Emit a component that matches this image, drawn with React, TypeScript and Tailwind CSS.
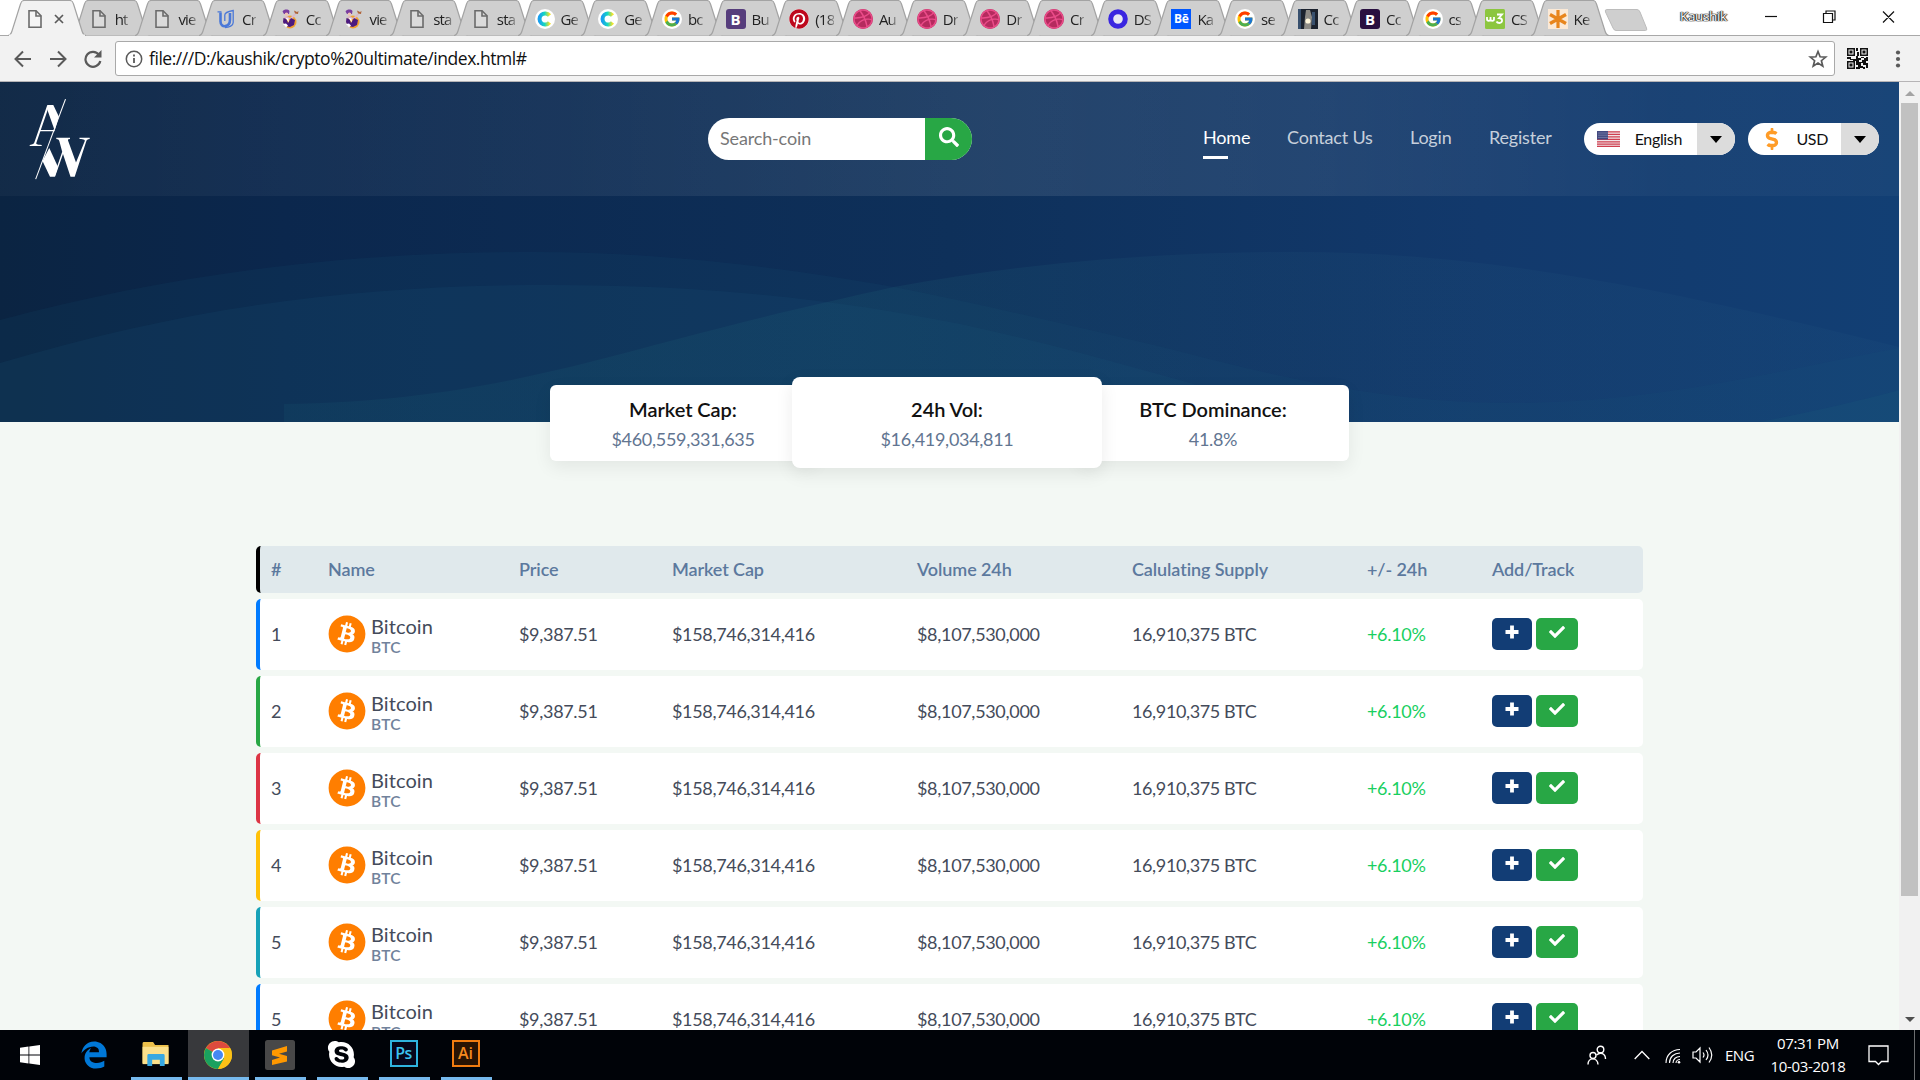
import React from 'react';
import { FaSearch, FaCheck, FaDollarSign, FaSkype, FaBitcoin, FaDribbble, FaPinterest, FaEdgeLegacy } from 'react-icons/fa';
import { FcGoogle } from 'react-icons/fc';

const uiFont = "font-['Open_Sans','Noto_Sans',sans-serif]";

function PageIcon() {
  return (
    <svg viewBox="0 0 20 20" className="h-5 w-5" fill="#fff" fillOpacity=".25" stroke="#6b6b6b" strokeWidth="1.6">
      <path d="M4 1.8h7l5 5v11.400H4z" />
      <path d="M11 1.800v5.200h5.200" fill="none" />
    </svg>
  );
}

function UIcon() {
  return (
    <svg viewBox="0 0 20 20" className="h-5 w-5" fill="none" stroke="#4a78d8">
      <path d="M4.500 3.500v9c0 7 9.500 6 9.500-2V4" strokeWidth="2.600" />
      <path d="M1.500 2.800h4M8.800 12V6c0-2 3-3.500 8.400-4.500v12c0 3-4 5-8.200 5" strokeWidth="1.300" />
    </svg>
  );
}

function GenieIcon() {
  return (
    <svg viewBox="0 0 20 20" className="h-5 w-5">
      <circle cx="10" cy="13" r="6.500" fill="#f0a030" />
      <path d="M2.500 2.500C4 0 8 0 9.500 2L9 5H4z" fill="#7a3da0" />
      <circle cx="6.500" cy="5.200" r="1.800" fill="#f0c4b4" />
      <path d="M14 1.500l3 1.500 1.500-1L18 5l-3-.5z" fill="#b0643a" />
      <path d="M3 8l4-1 3 2 4.500-4.500 1.500 1-4 4.500H6z" fill="#dcb8c8" />
      <path d="M3.500 9l3 1 1.500 4 3-5 4 2-1 5-4 2-5-1-2-4z" fill="#4b1a80" />
      <path d="M5.500 9l3 .5.500 4z" fill="#fff" />
      <path d="M3 15l3-.5 2 2-2 2z" fill="#fff" />
    </svg>
  );
}

function CIcon() {
  return (
    <svg viewBox="0 0 20 20" className="h-5 w-5">
      <defs>
        <linearGradient id="ring" x1="0" x2="1">
          <stop offset="0" stopColor="#1aa0ee" />
          <stop offset="0.5" stopColor="#14d8c0" />
          <stop offset="1" stopColor="#f2e22c" />
        </linearGradient>
      </defs>
      <circle cx="10" cy="10" r="10" fill="#fff" />
      <path d="M14.500 6.500a5.600 5.600 0 1 0 0 7" fill="none" stroke="url(#ring)" strokeWidth="4" />
    </svg>
  );
}

function GoogleIcon() {
  return (
    <span className="flex h-5 w-5 items-center justify-center rounded-full bg-white">
      <FcGoogle className="h-[18px] w-[18px]" />
    </span>
  );
}

function BIcon({ dark = false }: { dark?: boolean }) {
  return (
    <span className={`flex h-5 w-5 items-center justify-center rounded-[3px] text-[15px] font-bold leading-none text-white ${dark ? 'bg-[#2a1040]' : 'bg-[#563d7c]'}`}>B</span>
  );
}

function PinIcon() {
  return (
    <span className="flex h-5 w-5 items-center justify-center rounded-full bg-white">
      <FaPinterest className="h-5 w-5 text-[#bd081c]" />
    </span>
  );
}

function DribbbleIcon() {
  return (
    <span className="flex h-5 w-5 items-center justify-center rounded-full bg-[#b52a5e]">
      <FaDribbble className="h-5 w-5 text-[#ea4c89]" />
    </span>
  );
}

function RingIcon() {
  return (
    <svg viewBox="0 0 20 20" className="h-5 w-5">
      <circle cx="10" cy="10" r="7.300" fill="#e8e8f4" stroke="#3a26e0" strokeWidth="5" />
    </svg>
  );
}

function BeIcon() {
  return <span className="flex h-5 w-5 items-center justify-center bg-[#0057ff] text-[12px] font-bold leading-none tracking-tight text-white">Bē</span>;
}

function PhotoIcon() {
  return (
    <svg viewBox="0 0 20 20" className="h-5 w-5">
      <rect width="20" height="20" fill="#1b222e" />
      <path d="M0 0h3v20H0zM14 3h3v13h-3z" fill="#38506e" />
      <path d="M8 1h4l2 7-1 12H6L7 8z" fill="#8d8b86" />
      <circle cx="10" cy="12" r="2.6" fill="#fff6dc" />
    </svg>
  );
}

function W3Icon() {
  return (
    <svg viewBox="0 0 20 20" className="h-5 w-5">
      <rect width="20" height="20" rx="1.5" fill="#8cc63f" />
      <path d="M2 8v2c0 2.400 3.500 2.400 3.500 0V8v2c0 2.400 3.500 2.400 3.500 0V8M12 5.500h5l-3 3.500c4 0 4 5 .5 5-1.500 0-2.500-.5-3-1.500" fill="none" stroke="#fff" strokeWidth="1.8" />
    </svg>
  );
}

function StarburstIcon() {
  return (
    <svg viewBox="0 0 20 20" className="h-5 w-5">
      <rect width="20" height="20" fill="#fbe9d6" />
      <path d="M10 1v18M2 5.500l16 9M18 5.500l-16 9" stroke="#e8851c" strokeWidth="3.200" />
    </svg>
  );
}

const tabs: { icon: React.ReactNode; label: string }[] = [
  { icon: <PageIcon />, label: '' },
  { icon: <PageIcon />, label: 'ht' },
  { icon: <PageIcon />, label: 'vie' },
  { icon: <UIcon />, label: 'Cr' },
  { icon: <GenieIcon />, label: 'Cc' },
  { icon: <GenieIcon />, label: 'vie' },
  { icon: <PageIcon />, label: 'sta' },
  { icon: <PageIcon />, label: 'sta' },
  { icon: <CIcon />, label: 'Ge' },
  { icon: <CIcon />, label: 'Ge' },
  { icon: <GoogleIcon />, label: 'bc' },
  { icon: <BIcon />, label: 'Bu' },
  { icon: <PinIcon />, label: '(18' },
  { icon: <DribbbleIcon />, label: 'Au' },
  { icon: <DribbbleIcon />, label: 'Dr' },
  { icon: <DribbbleIcon />, label: 'Dr' },
  { icon: <DribbbleIcon />, label: 'Cr' },
  { icon: <RingIcon />, label: 'DS' },
  { icon: <BeIcon />, label: 'Ka' },
  { icon: <GoogleIcon />, label: 'se' },
  { icon: <PhotoIcon />, label: 'Cc' },
  { icon: <BIcon dark />, label: 'Cc' },
  { icon: <GoogleIcon />, label: 'cs' },
  { icon: <W3Icon />, label: 'CS' },
  { icon: <StarburstIcon />, label: 'Ke' },
];

function Tab({ icon, label, active, narrow }: { icon: React.ReactNode; label: string; active: boolean; narrow: boolean }) {
  return (
    <div className={`relative h-9 shrink-0 ${narrow ? 'w-[62.5px]' : 'w-[63.7px]'} ${active ? 'z-10' : ''}`}>
      <svg viewBox="0 0 80 36" className="absolute left-0 top-0 h-9 w-[80px]">
        <path
          d="M0 35.500C2 35.500 3 34 4 31L12.500 4C13.500 1 14 .5 16 .5H62C64 .5 64.500 1 65.500 4L74 31C75 34 76 35.500 78 35.500"
          fill={active ? '#f2f2f2' : '#cfcfcf'}
          stroke="#a3a3a3"
          strokeWidth="1.2"
        />
        {active && <path d="M1 35.500h76" stroke="#f2f2f2" strokeWidth="2" />}
      </svg>
      <div className="relative flex h-9 items-center gap-[10px] pl-[17px] pt-[2px]">
        <span className="h-5 w-5 shrink-0">{icon}</span>
        {active ? (
          <svg viewBox="0 0 10 10" className="-ml-px h-[10px] w-[10px]" stroke="#5a5a5a" strokeWidth="1.700">
            <path d="M1 1l8 8M9 1l-8 8" />
          </svg>
        ) : (
          <span className="-ml-[4px] whitespace-nowrap pb-px text-[15px] leading-5 tracking-[-0.8px] text-[#222] [mask-image:linear-gradient(to_right,#000_60%,rgba(0,0,0,0.35))]">{label}</span>
        )}
      </div>
    </div>
  );
}

function BrowserChrome() {
  return (
    <div className={uiFont}>
      <div className="flex h-9 items-start border-b border-[#a8a8a8] bg-white">
        <div className="flex w-[1580px] shrink-0 pl-2">
          {tabs.map((t, i) => (
            <Tab key={i} icon={t.icon} label={t.label} active={i === 0} narrow={i > 18} />
          ))}
        </div>
        <svg viewBox="0 0 44 22" className="ml-[24px] mt-[8.500px] h-[22px] w-[44px]">
          <path d="M3 .5h30q2 0 3 2.500l6.500 16q1 2.500-1 2.500H12q-2 0-3-2.500L1.500 3Q.5.500 3 .5z" fill="#cfcfcf" stroke="#bcbcbc" />
        </svg>
        <span className="ml-[32px] mt-[6px] w-[50px] text-[13.500px] leading-5 tracking-[-0.35px] text-white [text-shadow:0_0_1px_#000,0_0_1px_#000,1px_0_1px_#444,-1px_0_1px_#444]">Kaushik</span>
        <svg viewBox="0 0 140 20" className="ml-[31px] mt-[7px] h-5 w-[140px]" fill="none" stroke="#111" strokeWidth="1.200">
          <path d="M4 9.500h12" />
          <path d="M62.500 6.500h9v9h-9zM65 6V4h9v9h-2.500M122 4.500l11 11M133 4.500l-11 11" />
        </svg>
      </div>
      <div className="flex h-[46px] items-center border-b border-[#b6b4b6] bg-[#f2f2f2] pl-[14px]">
        <svg viewBox="0 0 18 18" className="h-[18px] w-[18px]" fill="none" stroke="#5a5a5a" strokeWidth="2">
          <path d="M17 9H2M9 1.500L1.500 9 9 16.500" />
        </svg>
        <svg viewBox="0 0 18 18" className="ml-[17px] h-[18px] w-[18px]" fill="none" stroke="#5a5a5a" strokeWidth="2">
          <path d="M1 9h15M9 1.500L16.500 9 9 16.500" />
        </svg>
        <svg viewBox="0 0 18 18" className="ml-[17px] h-[18px] w-[18px]" fill="none" stroke="#5a5a5a" strokeWidth="2.200">
          <path d="M15 4.800A7.500 7.500 0 1 0 16.300 11" />
          <path d="M17.500 0v7.500H10z" fill="#5a5a5a" stroke="none" />
        </svg>
        <div className="ml-[13px] flex h-[35px] w-[1720px] items-center rounded-[3px] border border-[#a9a9a9] bg-white pl-[9px] pr-[6px]">
          <svg viewBox="0 0 18 18" className="h-[18px] w-[18px]" fill="none" stroke="#5a5a5a">
            <circle cx="9" cy="9" r="7.700" strokeWidth="1.500" />
            <path d="M9 8v5M9 4.500v2" strokeWidth="1.800" />
          </svg>
          <span className="ml-[6px] pb-px text-[17.500px] leading-6 tracking-[-0.46px] text-[#111]">file:///D:/kaushik/crypto%20ultimate/index.html#</span>
          <svg viewBox="0 0 20 20" className="ml-auto h-[20px] w-[20px]" fill="none" stroke="#5a5a5a" strokeWidth="1.700">
            <path d="M10 2.500l2.100 5.300 5.600.3-4.300 3.600 1.400 5.500L10 14.100l-4.800 3.100 1.400-5.500L2.300 8.100l5.600-.3z" />
          </svg>
        </div>
        <svg viewBox="0 0 21 21" className="ml-[12px] h-[21px] w-[21px]" fill="#111">
          <path fillRule="evenodd" d="M0 0h8v8H0zM1.500 1.500v5h5v-5zM13 0h8v8h-8zM14.500 1.500v5h5v-5zM0 13h8v8H0zM1.500 14.500v5h5v-5z" />
          <path d="M2.500 2.500h3v3h-3zM15.500 2.500h3v3h-3zM2.500 15.500h3v3h-3zM9 0h2v3H9zM10 4h2v4h-2zM9 8h2v2h3v2h-2v2h3v-2h2v-2h4v3h-2v2h2v5h-2v-3h-3v-2h-2v3h2v2h-3v2H9v-3h2v-2H9v-4H6v-2h3zM0 9h4v2H0zM3 11h3v1H3z" />
          <path d="M16 19h2v2h-2zM14 9h3v1h-3zM19 9h2v1h-2z" />
        </svg>
        <svg viewBox="0 0 6 20" className="ml-[27px] h-5 w-[6px]" fill="#5a5a5a">
          <circle cx="3" cy="3.500" r="2.100" /><circle cx="3" cy="10" r="2.100" /><circle cx="3" cy="16.500" r="2.100" />
        </svg>
      </div>
    </div>
  );
}

function Logo() {
  return (
    <svg viewBox="0 0 62 84" className="ml-[29px] h-[84px] w-[62px]" fill="#fff">
      <path d="M18.300 8h6l5.500 11.500L25.700 33.500 18.800 14z" />
      <path d="M18.300 8l1.400 2L7.300 46c-.3 1.300.5 1.700 5.400 1.900v1H.7v-1C4 47.500 4.700 47 5.500 45z" />
      <path d="M10.500 33h15.200v1.300H10.200z" />
      <path d="M36 2l1 .3L7.200 82.300l-1-.3z" />
      <path d="M20.300 51l8.700 19-3.300 9.700H21L13.500 64z" />
      <path d="M27.300 40.700H41v1.200c-2.300.2-2.300.6-1.700 2.300L47 65.500l8.600-21c.8-2-.5-2.400-5.100-2.600v-1.200h10.200v1.200c-2.300.3-2.800.6-3.500 2.500L45.700 79.700h-4.200L34 57l-8 22.700-1-1 8.200-24L30.300 44c-.7-1.700-1-1.900-3-2.100z" />
    </svg>
  );
}

function FlagIcon() {
  return (
    <svg viewBox="0 0 23 16" className="h-4 w-[23px]">
      <rect width="23" height="16" rx="1" fill="#f1e4e7" />
      <path d="M0 .8h23M0 3.300h23M0 5.800h23M0 8.300h23M0 10.800h23M0 13.200h23M0 15.400h23" stroke="#cf3f50" strokeWidth="1.200" />
      <rect width="11" height="8.500" fill="#434a80" />
      <path d="M1.500 2h9M1.500 4.200h9M1.500 6.400h9" stroke="#a9adcb" strokeWidth=".9" strokeDasharray="1 1" />
    </svg>
  );
}

function Picker({ icon, label, wide }: { icon: React.ReactNode; label: string; wide: boolean }) {
  return (
    <div className={`flex h-8 overflow-hidden rounded-full bg-white ${wide ? 'w-[151px]' : 'w-[131px]'}`}>
      <div className={`flex flex-1 items-center justify-between ${wide ? 'pl-[13px] pr-[15px]' : 'pl-[17px] pr-[13px]'}`}>
        {icon}
        <span className="text-[16px] tracking-[-0.35px] text-[#111]">{label}</span>
      </div>
      <div className="flex w-[38px] items-center justify-center bg-[#dcdcdc]">
        <span className="h-0 w-0 border-x-[6px] border-t-[7px] border-x-transparent border-t-black" />
      </div>
    </div>
  );
}

function Header() {
  return (
    <header className="flex h-[114px] items-center bg-[linear-gradient(to_right,rgba(255,255,255,0.03)_0%,rgba(255,255,255,0.06)_30%,rgba(255,255,255,0.095)_52%,rgba(255,255,255,0.08)_70%,rgba(255,255,255,0.035)_88%,rgba(255,255,255,0.03)_100%)]">
      <Logo />
      <div className="ml-[617px] flex h-[42px] w-[264px] overflow-hidden rounded-full bg-white">
        <span className="flex flex-1 items-center pb-[2px] pl-3 text-[18px] tracking-[-0.15px] text-[#777]">Search-coin</span>
        <span className="flex w-[47px] items-center justify-center bg-[#28a745] pb-1 text-white"><FaSearch className="h-5 w-5" /></span>
      </div>
      <nav className="ml-[231px] flex h-[42px] w-[381px] items-start text-[18px] leading-[38px] tracking-[-0.2px] text-white/75">
        <div className="w-[84px] text-white">
          Home
          <div className="h-[3px] w-[25px] bg-white" />
        </div>
        <div className="w-[123px]">Contact Us</div>
        <div className="w-[79px]">Login</div>
        <div>Register</div>
      </nav>
      <Picker wide icon={<FlagIcon />} label="English" />
      <div className="w-[13px]" />
      <Picker wide={false} icon={<FaDollarSign className="h-[22px] w-[14px] text-[#ff9c27]" />} label="USD" />
    </header>
  );
}

function Waves() {
  return (
    <svg viewBox="0 82 1899 340" preserveAspectRatio="none" className="absolute inset-0 h-full w-full">
      <defs>
        <linearGradient id="crest" x1="0" x2="1">
          <stop offset="0" stopColor="#1a6278" stopOpacity=".15" />
          <stop offset=".35" stopColor="#1f6678" stopOpacity=".19" />
          <stop offset=".6" stopColor="#205278" stopOpacity=".18" />
          <stop offset="1" stopColor="#205280" stopOpacity=".18" />
        </linearGradient>
      </defs>
      <path d="M0 320C160 277 330 252 533 252C660 252 790 268 894 287C990 306 1090 330 1174 350C1290 380 1390 403 1511 403C1660 403 1780 370 1899 348V422H0z" fill="#1c5878" fillOpacity=".12" />
      <path d="M0 363C180 310 340 285 551 285C720 285 850 302 960 324C1090 352 1210 390 1330 422H0z" fill="#1c5c7c" fillOpacity=".14" />
      <path d="M284 422V404C450 402 560 370 674 340C760 317 830 301 894 287C1030 262 1160 252 1297 252C1500 252 1690 295 1899 347V422z" fill="url(#crest)" />
      <path d="M1760 422C1810 412 1860 401 1899 390V422z" fill="#1c6a80" fillOpacity=".14" />
    </svg>
  );
}

function Stat({ title, value }: { title: string; value: string }) {
  return (
    <>
      <div className="text-[20px] font-semibold leading-6 tracking-[-0.05px] text-[#111]">{title}</div>
      <div className="mt-[6px] text-[18px] leading-6 tracking-[-0.3px] text-[#627591]">{value}</div>
    </>
  );
}

function Stats() {
  return (
    <div className="relative -mt-[45px] flex h-[91px] items-center justify-center px-px text-center">
      <div className="h-[76px] w-[266px] rounded-[6px] bg-white pt-[12px] shadow-[0_6px_18px_rgba(0,0,0,0.07)]"><Stat title="Market Cap:" value="$460,559,331,635" /></div>
      <div className="relative z-10 -ml-[24px] h-[91px] w-[310px] rounded-[8px] bg-white pt-[20px] shadow-[0_6px_18px_rgba(0,0,0,0.08)]"><Stat title="24h Vol:" value="$16,419,034,811" /></div>
      <div className="-ml-[24px] h-[76px] w-[271px] rounded-[6px] bg-white pr-px pt-[12px] shadow-[0_6px_18px_rgba(0,0,0,0.07)]"><Stat title="BTC Dominance:" value="41.8%" /></div>
    </div>
  );
}

const grid = 'grid grid-cols-[57px_191px_153px_245px_215px_235px_125px_1fr] items-center pl-[11px]';

const rows = [
  { n: 1, edge: 'border-[#007bff]' },
  { n: 2, edge: 'border-[#28a745]' },
  { n: 3, edge: 'border-[#dc3545]' },
  { n: 4, edge: 'border-[#ffc107]' },
  { n: 5, edge: 'border-[#17a2b8]' },
  { n: 5, edge: 'border-[#007bff]' },
];

function CoinTable() {
  return (
    <div className="ml-[256px] mt-[78px] w-[1387px] text-[18px] text-[#444b5a]">
      <div className={`${grid} h-[47px] rounded-[5px] border-l-4 border-black bg-[#e0e9ec] font-semibold tracking-[-0.1px] text-[#5c799e]`}>
        <span>#</span><span>Name</span><span>Price</span><span>Market Cap</span><span>Volume 24h</span><span>Calulating Supply</span><span>+/- 24h</span><span>Add/Track</span>
      </div>
      {rows.map((r, i) => (
        <div key={i} className={`${grid} mt-[6px] h-[71px] rounded-[5px] border-l-4 bg-white tracking-[-0.32px] ${r.edge}`}>
          <span>{r.n}</span>
          <div className="flex items-center gap-[5px] tracking-normal">
            <FaBitcoin className="mb-px h-[38px] w-[38px] text-[#ff7e00]" />
            <div className="pt-[2px]">
              <div className="text-[20px] leading-[22px] tracking-[0.1px]">Bitcoin</div>
              <div className="text-[15.500px] font-semibold leading-[20px] tracking-[0.2px] text-[#71829b]">BTC</div>
            </div>
          </div>
          <span>$9,387.51</span>
          <span>$158,746,314,416</span>
          <span>$8,107,530,000</span>
          <span className="tracking-[-0.38px]">16,910,375 BTC</span>
          <span className="text-[#19cf5f]">+6.10%</span>
          <div className="flex gap-1 pb-[2px] text-white">
            <span className="flex h-8 w-10 items-center justify-center rounded-[5px] bg-[#123d75] pb-[3px]">
              <svg viewBox="0 0 14 14" className="h-[14px] w-[14px]"><path d="M7 .5v13M.5 7h13" stroke="#fff" strokeWidth="3.800" /></svg>
            </span>
            <span className="flex h-8 w-[42px] items-center justify-center rounded-[5px] bg-[#28a745] pb-[3px]"><FaCheck className="h-4 w-4" /></span>
          </div>
        </div>
      ))}
    </div>
  );
}

function Scrollbar() {
  return (
    <div className="flex h-[948px] w-[21px] flex-col items-center bg-[#f1f1f1]">
      <span className="mt-[9px] h-0 w-0 border-x-[5px] border-b-[5px] border-x-transparent border-b-[#a3a3a3]" />
      <span className="mt-[7px] h-[793px] w-[17px] bg-[#c1c1c1]" />
      <span className="mb-[8px] mt-auto h-0 w-0 border-x-[5px] border-t-[5px] border-x-transparent border-t-[#505050]" />
    </div>
  );
}

function TaskButton({ children, width, active, running }: { children: React.ReactNode; width: string; active?: boolean; running?: boolean }) {
  return (
    <div className={`flex h-full flex-col items-center justify-end ${width} ${active ? 'bg-[#38393c]' : ''}`}>
      <div className="flex h-[47px] items-center pr-[2px] pt-[2px]">{children}</div>
      <div className={`h-[3px] w-full ${running ? 'bg-[#76b9ed]' : ''}`} />
    </div>
  );
}

function ChromeIcon() {
  return (
    <svg viewBox="0 0 28 28" className="h-7 w-7">
      <circle cx="14" cy="14" r="14" fill="#fbc116" />
      <path d="M14 14L1.900 7A14 14 0 0 1 26.100 7H14z" fill="#dd4b3e" />
      <path d="M14 14L1.900 7A14 14 0 0 0 14 28l6.100-10.500z" fill="#1aa15f" />
      <path d="M14 7h12.100A14 14 0 0 1 14 28l6.100-10.500z" fill="#fbc116" />
      <circle cx="14" cy="14" r="6.400" fill="#fff" />
      <circle cx="14" cy="14" r="5" fill="#4688f1" />
    </svg>
  );
}

function Taskbar() {
  return (
    <div className={`flex h-[50px] bg-[#000308] text-white ${uiFont}`}>
      <TaskButton width="w-[61px]">
        <svg viewBox="0 0 20 20" className="h-5 w-5" fill="#fff"><path d="M0 2.800l8.500-1.200v8H0zM9.300 1.500L20 0v9.600H9.300zM0 10.400h8.500v8L0 17.200zM9.300 10.400H20V20L9.300 18.500z" /></svg>
      </TaskButton>
      <TaskButton width="w-[68px]"><FaEdgeLegacy className="h-[28px] w-[28px] text-[#0078d7]" /></TaskButton>
      <div className="w-[2px]" />
      <TaskButton width="w-[51px]" running>
        <svg viewBox="0 0 28 26" className="h-[25px] w-7">
          <path d="M0 1.500Q0 0 1.500 0H11l2 3h14v19H0z" fill="#ecc04a" />
          <path d="M0 5h27v18H0z" fill="#fbe08b" />
          <path d="M5 25v-11q0-1.500 1.500-1.500h15q1.500 0 1.500 1.500v11h-5v-6.500h-8V25z" fill="#37a8e2" />
        </svg>
      </TaskButton>
      <div className="w-[6px]" />
      <TaskButton width="w-[61px]" running active><ChromeIcon /></TaskButton>
      <div className="w-[6px]" />
      <TaskButton width="w-[51px]" running>
        <svg viewBox="0 0 30 30" className="h-[30px] w-[30px]"><rect width="30" height="30" rx="2.500" fill="#484848" /><path d="M7 10.500L22 6v5.500l-8 2.300 8 2.200v5.500L7 25v-5l8-2.500-8-2.300z" fill="#ff9800" /></svg>
      </TaskButton>
      <div className="w-[11px]" />
      <TaskButton width="w-[51px]" running><FaSkype className="h-[31px] w-[31px]" /></TaskButton>
      <div className="w-[11px]" />
      <TaskButton width="w-[51px]" running>
        <span className="mb-[3px] flex h-[27px] w-7 items-center justify-center border-2 border-[#2fb4e0] bg-[#06071c] text-[16px] font-semibold leading-none tracking-[-0.5px] text-[#3cc2f0]">Ps</span>
      </TaskButton>
      <div className="w-[11px]" />
      <TaskButton width="w-[51px]" running>
        <span className="mb-[3px] flex h-[27px] w-7 items-center justify-center border-2 border-[#f07c10] bg-[#271303] text-[16px] font-semibold leading-none text-[#f58a1f]">Ai</span>
      </TaskButton>
      <div className="ml-auto flex h-full items-center">
        <svg viewBox="0 0 20 20" className="h-5 w-5" fill="none" stroke="#fff" strokeWidth="1.400">
          <circle cx="13.500" cy="4.500" r="3.300" /><circle cx="6" cy="10.500" r="3" /><path d="M1 19.500c0-7.500 9.500-7.500 10 0M9.500 10c4-3.500 9-1.500 9 4" />
        </svg>
        <svg viewBox="0 0 16 10" className="ml-[27px] h-[10px] w-4" fill="none" stroke="#fff" strokeWidth="1.300"><path d="M.7 9L8 1.500 15.300 9" /></svg>
        <svg viewBox="0 0 16 16" className="ml-[15px] mt-[2px] h-4 w-4" fill="none" stroke="#fff" strokeWidth="1.100">
          <path d="M1 15C1 7 7 1.500 15 1.500M4.500 15C4.500 9 9 5 15 5M8 15c0-4 3-6.500 7-6.500M11 15c0-2 2-3.500 4-3.500" /><circle cx="14" cy="14.200" r="1.300" fill="#fff" stroke="none" />
        </svg>
        <svg viewBox="0 0 21 18" className="ml-[11px] h-[18px] w-[21px]" fill="none" stroke="#fff" strokeWidth="1.200">
          <path d="M1 6h3l4-4v14l-4-4H1zM11 6.500q2 2.500 0 5M14 4q4 5 0 10M17 1.500q5.500 7.500 0 15" />
        </svg>
        <span className="ml-[12px] w-[30px] text-[15px] tracking-[-0.5px]">ENG</span>
        <div className="ml-[13px] flex w-[80px] flex-col items-center whitespace-nowrap text-[15px] leading-[23px] tracking-[-0.35px]"><span>07:31 PM</span><span>10-03-2018</span></div>
        <svg viewBox="0 0 21 21" className="ml-[20px] h-[21px] w-[21px]" fill="none" stroke="#fff" strokeWidth="1.300"><path d="M1 1h19v15.500h-6.500L10.500 19.500 7.500 16.500H1z" /></svg>
        <div className="ml-[25px] mr-[5px] h-[50px] w-px bg-[#6c6e70]" />
      </div>
    </div>
  );
}

export default function App() {
  return (
    <div className="h-[1080px] w-[1920px] overflow-hidden bg-white">
      <BrowserChrome />
      <div className="flex h-[948px] overflow-hidden">
        <main className="h-[948px] w-[1899px] overflow-hidden bg-[#f3f8f4] font-['Lato',sans-serif]">
          <section className="relative h-[340px] bg-[linear-gradient(to_right,#0b2442_0%,#0b274d_15%,#0e305a_50%,#12396c_78%,#123f74_100%)]">
            <Waves />
            <div className="relative"><Header /></div>
          </section>
          <Stats />
          <CoinTable />
        </main>
        <Scrollbar />
      </div>
      <Taskbar />
    </div>
  );
}
